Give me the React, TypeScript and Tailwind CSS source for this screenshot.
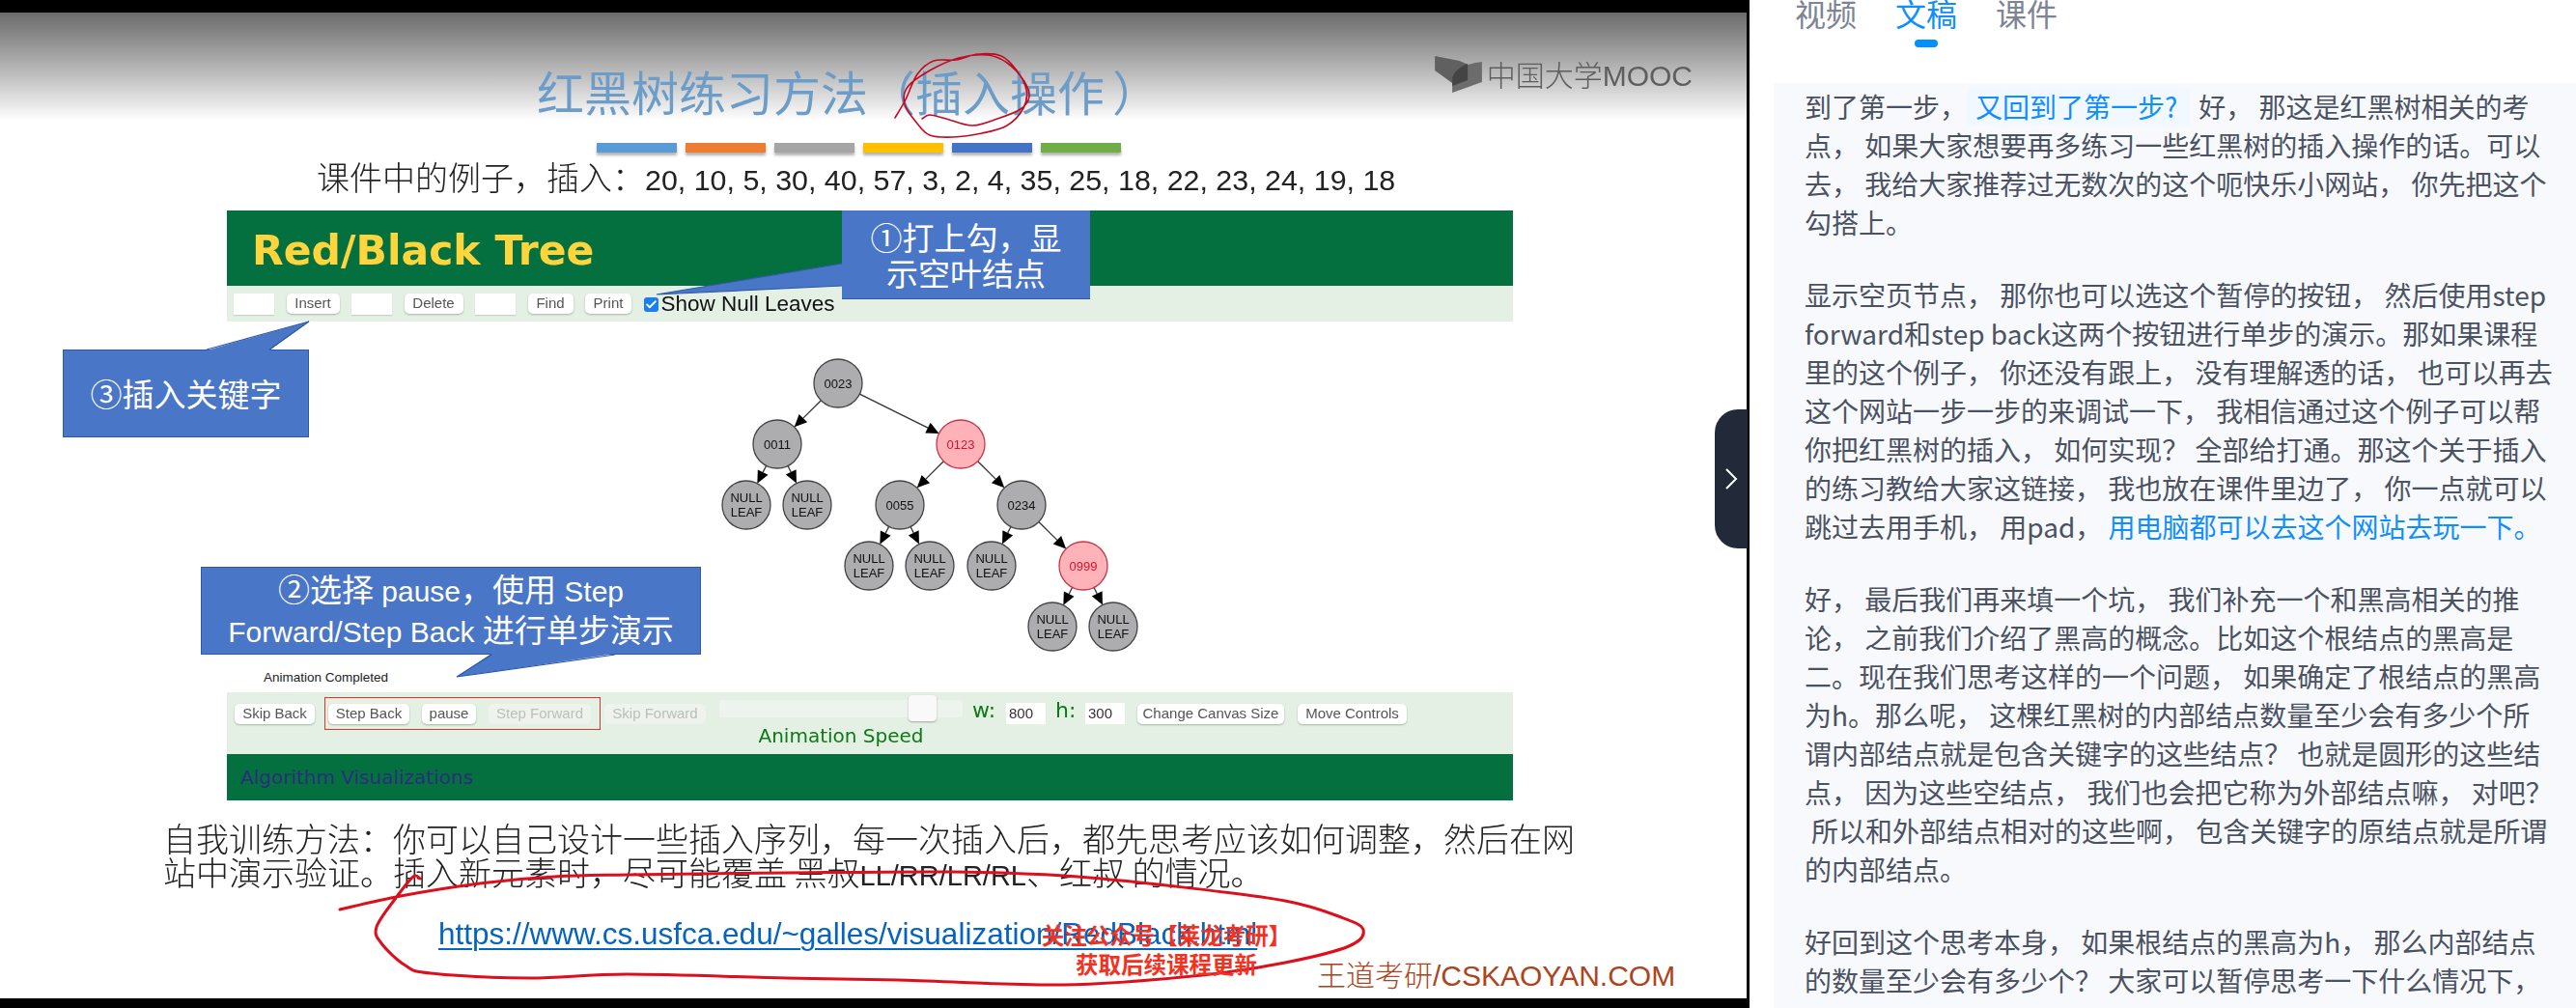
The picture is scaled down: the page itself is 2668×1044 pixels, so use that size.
import { Check } from "lucide-react";

type TreeNode = {
	x: number;
	y: number;
	label: string;
	red?: boolean;
	parent?: number;
};

const R = 25;

const nodes: TreeNode[] = [
	{ x: 868, y: 397, label: "0023" },
	{ x: 805, y: 460, label: "0011", parent: 0 },
	{ x: 995, y: 460, label: "0123", red: true, parent: 0 },
	{ x: 773, y: 523, label: "NULL", parent: 1 },
	{ x: 836, y: 523, label: "NULL", parent: 1 },
	{ x: 932, y: 523, label: "0055", parent: 2 },
	{ x: 1058, y: 523, label: "0234", parent: 2 },
	{ x: 900, y: 586, label: "NULL", parent: 5 },
	{ x: 963, y: 586, label: "NULL", parent: 5 },
	{ x: 1027, y: 586, label: "NULL", parent: 6 },
	{ x: 1122, y: 586, label: "0999", red: true, parent: 6 },
	{ x: 1090, y: 649, label: "NULL", parent: 10 },
	{ x: 1153, y: 649, label: "NULL", parent: 10 }
];

const circleScribble: [number, number][] = [
	[927, 122], [938, 103], [950, 77], [967, 63], [990, 62], [1013, 56], [1037, 58], [1053, 73], [1063, 93], [1060, 112],
	[1043, 130], [1017, 138], [987, 142], [963, 140], [950, 128], [937, 108], [940, 90], [963, 73], [993, 60], [1023, 57],
	[1043, 65], [1060, 83], [1066, 100], [1057, 113], [1033, 123], [1007, 130], [980, 123], [963, 119], [955, 123]
];

const linkScribble: [number, number][] = [
	[352, 942], [415, 928], [497, 915], [574, 908], [650, 906], [815, 904], [987, 903], [1102, 907], [1217, 918], [1331, 933],
	[1389, 950], [1412, 963], [1397, 980], [1331, 997], [1245, 1010], [1102, 1020], [930, 1015], [815, 1013], [650, 1009],
	[548, 1013], [446, 1008], [420, 1000], [395, 977], [390, 960], [410, 930], [428, 908], [435, 910]
];

// catmull-rom through the sampled pen points
function smooth(points: [number, number][]) {
	let d = `M${points[0][0]} ${points[0][1]}`;
	for (let i = 0; i < points.length - 1; i++) {
		const p0 = points[Math.max(i - 1, 0)];
		const p1 = points[i];
		const p2 = points[i + 1];
		const p3 = points[Math.min(i + 2, points.length - 1)];
		d += ` C${p1[0] + (p2[0] - p0[0]) / 6} ${p1[1] + (p2[1] - p0[1]) / 6} ${p2[0] - (p3[0] - p1[0]) / 6} ${p2[1] - (p3[1] - p1[1]) / 6} ${p2[0]} ${p2[1]}`;
	}
	return d;
}

function TreeEdge({ from, to }: { from: TreeNode; to: TreeNode }) {
	const dx = to.x - from.x;
	const dy = to.y - from.y;
	const len = Math.hypot(dx, dy);
	const ux = dx / len;
	const uy = dy / len;
	const tipX = to.x - ux * R;
	const tipY = to.y - uy * R;
	const baseX = tipX - ux * 13;
	const baseY = tipY - uy * 13;
	return (
		<g>
			<line x1={from.x + ux * R} y1={from.y + uy * R} x2={baseX} y2={baseY} stroke="#333" strokeWidth="1.3" />
			<polygon
				points={`${tipX},${tipY} ${baseX - uy * 6},${baseY + ux * 6} ${baseX + uy * 6},${baseY - ux * 6}`}
				fill="#000"
			/>
		</g>
	);
}

function TreeCanvas() {
	return (
		<svg viewBox="235 333 1332 384" className="h-full w-full">
			{nodes.map((node, i) =>
				node.parent === undefined ? null : <TreeEdge key={i} from={nodes[node.parent]} to={node} />
			)}
			{nodes.map((node, i) => (
				<g key={i} fontFamily="Liberation Sans, sans-serif" textAnchor="middle">
					<circle
						cx={node.x}
						cy={node.y}
						r={R}
						fill={node.red ? "#ffb3b8" : "#adadaf"}
						stroke={node.red ? "#c2394b" : "#444"}
						strokeWidth="1.3"
					/>
					{node.label === "NULL" ? (
						<text fontSize="13" fill="#111">
							<tspan x={node.x} y={node.y - 3}>
								NULL
							</tspan>
							<tspan x={node.x} y={node.y + 12}>
								LEAF
							</tspan>
						</text>
					) : (
						<text x={node.x} y={node.y + 4.5} fontSize="13" fill={node.red ? "#d4142e" : "#111"}>
							{node.label}
						</text>
					)}
				</g>
			))}
		</svg>
	);
}

function ToolButton({ className, disabled, children }: { className: string; disabled?: boolean; children: string }) {
	return (
		<div
			className={`flex h-[21px] shrink-0 items-center justify-center rounded-[5px] text-[15px] shadow-[0_1px_2px_rgba(0,0,0,0.25)] ${
				disabled ? "bg-[#eef3ee] text-[#b9c0b9] shadow-none" : "bg-white text-[#555]"
			} ${className}`}
		>
			{children}
		</div>
	);
}

function ToolInput() {
	return <div className="h-[22px] w-[42px] shrink-0 bg-white shadow-[0_1px_1px_rgba(0,0,0,0.12)]" />;
}

function MoocLogo() {
	return (
		<div className="mt-[43px] mr-[56px] flex items-start">
			<svg viewBox="0 0 50 40" preserveAspectRatio="none" className="h-[40px] w-[53px]">
				<path d="M2 2 L26 7 L41 14 L19 22 L19 30 L2 17 Z" fill="#606060" />
				<path d="M48 8 L48 29 L19 40 L19 23 Q27 10 48 8 Z" fill="#6c6c6c" />
				<path d="M19 23 Q24 14 34 10 L34 27 L19 33 Z" fill="#444" />
			</svg>
			<span className="mt-[-1px] ml-[3px] text-[30px] leading-[42px] font-light text-[#5e5e5e]">
				中国大学<span className="font-['Liberation_Sans',sans-serif]">MOOC</span>
			</span>
		</div>
	);
}

function Slide() {
	return (
		<div className="h-[1021px] w-[1809px] bg-white text-[#222] blur-[0.5px]">
			<div className="flex h-[112px] justify-between bg-gradient-to-b from-[#6c6c6c] to-white">
				<h1 className="mt-[53px] ml-[556px] text-[49px] leading-[56px] font-normal whitespace-nowrap text-[#6c9cc8]">
					红黑树练习方法（插入操作<span className="ml-[8px]">）</span>
				</h1>
				<MoocLogo />
			</div>

			<div className="mt-[23px] ml-[618px] flex gap-[9px]">
				<div className="h-[10px] w-[83px] bg-[#5b9bd5] shadow-[0_3px_3px_rgba(0,0,0,0.3)]" />
				<div className="h-[10px] w-[83px] bg-[#ed7d31] shadow-[0_3px_3px_rgba(0,0,0,0.3)]" />
				<div className="h-[10px] w-[83px] bg-[#a5a5a5] shadow-[0_3px_3px_rgba(0,0,0,0.3)]" />
				<div className="h-[10px] w-[83px] bg-[#ffc000] shadow-[0_3px_3px_rgba(0,0,0,0.3)]" />
				<div className="h-[10px] w-[83px] bg-[#4472c4] shadow-[0_3px_3px_rgba(0,0,0,0.3)]" />
				<div className="h-[10px] w-[83px] bg-[#70ad47] shadow-[0_3px_3px_rgba(0,0,0,0.3)]" />
			</div>

			<p className="mt-[7px] h-[36px] pl-[328px] text-[34px] leading-[36px] font-light whitespace-nowrap">
				课件中的例子，插入：
				<span className="font-['Liberation_Sans',sans-serif] text-[30.4px] font-normal">
					20, 10, 5, 30, 40, 57, 3, 2, 4, 35, 25, 18, 22, 23, 24, 19, 18
				</span>
			</p>

			<div className="mt-[17px] ml-[235px] w-[1332px] font-['Liberation_Sans',sans-serif]">
				<div className="flex h-[78px] items-center bg-[#04703f] pt-[6px] pl-[26px] font-['DejaVu_Sans',sans-serif] text-[42.5px] font-bold text-[#ffd53d]">
					Red/Black Tree
				</div>
				<div className="flex h-[37px] items-center gap-[12.5px] bg-[#e4f0e4] pl-[7px]">
					<ToolInput />
					<ToolButton className="w-[55px]">Insert</ToolButton>
					<ToolInput />
					<ToolButton className="w-[61px]">Delete</ToolButton>
					<ToolInput />
					<ToolButton className="w-[47px]">Find</ToolButton>
					<ToolButton className="w-[48px]">Print</ToolButton>
					<div className="flex items-center gap-[3px]">
						<div className="mt-[2px] flex h-[15px] w-[15px] items-center justify-center rounded-[3px] bg-[#1a7ff0]">
							<Check size={13} strokeWidth={3.5} color="#fff" />
						</div>
						<span className="text-[22.5px] leading-[26px] text-[#111]">Show Null Leaves</span>
					</div>
				</div>
				<div className="h-[384px]">
					<TreeCanvas />
				</div>
				<div className="flex h-[64px] items-start bg-[#e4f0e4] pt-[5px] pl-[8px]">
					<ToolButton className="mt-[7px] w-[83px]">Skip Back</ToolButton>
					<div className="ml-[10px] flex h-[34px] w-[286px] items-center gap-[13px] border border-[#e0352b] pl-[3px]">
						<ToolButton className="w-[84px]">Step Back</ToolButton>
						<ToolButton className="w-[56px]">pause</ToolButton>
						<ToolButton disabled className="w-[106px]">
							Step Forward
						</ToolButton>
					</div>
					<ToolButton disabled className="mt-[7px] ml-[4px] w-[105px]">
						Skip Forward
					</ToolButton>
					<div className="ml-[14px] w-[252px]">
						<div className="relative mt-[3px] h-[18px] rounded-[3px] bg-[#edf3ed]">
							<div className="absolute top-[-5px] left-[196px] h-[27px] w-[29px] rounded-[4px] bg-[#f8f9f8] shadow-[0_1px_2px_rgba(0,0,0,0.3)]" />
						</div>
						<div className="mt-[7px] text-center font-['DejaVu_Sans',sans-serif] text-[20px] leading-[24px] text-[#0b7a14]">
							Animation Speed
						</div>
					</div>
					<span className="mt-[1px] ml-[10px] w-[25px] font-['DejaVu_Sans',sans-serif] text-[22px] leading-[26px] text-[#0b7a14]">
						w:
					</span>
					<div className="mt-[6px] ml-[10px] flex h-[22px] w-[41px] items-center bg-white pl-[3px] text-[15px] text-[#333]">
						800
					</div>
					<span className="mt-[1px] ml-[10px] w-[21px] font-['DejaVu_Sans',sans-serif] text-[22px] leading-[26px] text-[#0b7a14]">
						h:
					</span>
					<div className="mt-[6px] ml-[10px] flex h-[22px] w-[41px] items-center bg-white pl-[3px] text-[15px] text-[#333]">
						300
					</div>
					<ToolButton className="mt-[7px] ml-[13px] w-[152px]">Change Canvas Size</ToolButton>
					<ToolButton className="mt-[7px] ml-[14px] w-[113px]">Move Controls</ToolButton>
				</div>
				<div className="flex h-[48px] items-center bg-[#04703f] pl-[14px] font-['DejaVu_Sans',sans-serif] text-[20px] text-[#2d2b7f]">
					Algorithm Visualizations
				</div>
			</div>

			<div className="mt-[21px] pl-[169px] text-[34px] leading-[35px] font-light whitespace-nowrap">
				<p className="h-[35px]">自我训练方法：你可以自己设计一些插入序列，每一次插入后，都先思考应该如何调整，然后在网</p>
				<p className="h-[35px]">
					站中演示验证。插入新元素时，尽可能覆盖 黑叔
					<span className="font-['Liberation_Sans',sans-serif] text-[29px] font-normal">LL/RR/LR/RL</span>、红叔
					的情况。
				</p>
			</div>

			<p className="mt-[27px] pl-[454px] font-['Liberation_Sans',sans-serif] text-[31.5px] leading-[40px] whitespace-nowrap text-[#0563c1] underline decoration-[2px] underline-offset-[4px]">
				https://www.cs.usfca.edu/~galles/visualization/RedBlack.html
			</p>
		</div>
	);
}

function Overlays() {
	return (
		<>
			{/* callout bodies */}
			<div className="absolute top-[218px] left-[872px] flex h-[92px] w-[257px] items-center justify-center border-b border-[#2f5ca8] bg-[#4a76c8] text-center text-[33px] leading-[37px] text-white">
				①打上勾，显
				<br />
				示空叶结点
			</div>
			<div className="absolute top-[362px] left-[65px] flex h-[91px] w-[255px] items-center justify-center border border-[#2b5aa8] bg-[#4a76c8] text-[33px] text-white">
				③插入关键字
			</div>
			<div className="absolute top-[587px] left-[208px] flex h-[91px] w-[518px] flex-col items-center justify-center border border-[#2b5aa8] bg-[#4a76c8] font-['Liberation_Sans','Noto_Sans_CJK_SC',sans-serif] text-[30px] leading-[41px] text-white">
				<span>
					<span className="text-[33px]">②选择</span> pause<span className="text-[33px]">，使用</span> Step
				</span>
				<span>
					Forward/Step Back <span className="text-[33px]">进行单步演示</span>
				</span>
			</div>
			<span className="absolute top-[693px] left-[273px] font-['Liberation_Sans',sans-serif] text-[13.5px] leading-[18px] text-[#222]">
				Animation Completed
			</span>

			<svg viewBox="0 0 1809 1044" className="pointer-events-none absolute top-0 left-0 h-[1044px] w-[1809px]">
				<polygon points="872,273 680,305 872,296" fill="#4a76c8" />
				<polyline points="872,296 680,305 872,273" fill="none" stroke="#2f5ca8" strokeWidth="1.2" />
				<polygon points="214,363 320,333 279,363" fill="#4a76c8" />
				<polyline points="214,362 320,333 279,362" fill="none" stroke="#2b5aa8" strokeWidth="1.2" />
				<polygon points="509,677 473,701 637,677" fill="#4a76c8" />
				<polyline points="509,678 473,701 637,678" fill="none" stroke="#2b5aa8" strokeWidth="1.2" />
				<path d={smooth(circleScribble)} fill="none" stroke="#c20a24" strokeWidth="1.6" strokeLinecap="round" />
				<path d={smooth(linkScribble)} fill="none" stroke="#dc0f1c" strokeWidth="3" strokeLinecap="round" />
			</svg>

			{/* course watermarks burnt into the video */}
			<div className="absolute top-[953px] left-[1078px] w-[260px] text-center text-[23.5px] leading-[30px] font-bold whitespace-nowrap text-[#f2311f]">
				关注公众号【莱龙考研】
				<br />
				获取后续课程更新
			</div>
			<span className="absolute top-[986px] left-[1364px] font-['Liberation_Sans','Noto_Sans_CJK_SC',sans-serif] text-[30px] leading-[44px] whitespace-nowrap text-[#ac4420]">
				<span className="font-['Noto_Sans_CJK_SC',sans-serif] font-light">王道考研</span>/CSKAOYAN.COM
			</span>
		</>
	);
}

const paragraphClass = "mt-[35px]";

function TranscriptPanel() {
	return (
		<div className="min-w-0 flex-1 overflow-hidden">
			<div className="flex h-[86px] items-start gap-[40px] pl-[47px]">
				<span className="text-[32px] leading-[26px] text-[#7d8494]">视频</span>
				<div className="flex flex-col items-center">
					<span className="text-[32px] leading-[26px] text-[#0f8fff]">文稿</span>
					<div className="mt-[15px] h-[8px] w-[24px] rounded-full bg-[#0090ff]" />
				</div>
				<span className="text-[32px] leading-[26px] text-[#7d8494]">课件</span>
			</div>
			<div className="ml-[25px] h-[958px] bg-[#f7f9fd] pt-[4px] pl-[32px] text-[28px] leading-[40px] whitespace-nowrap text-[#4b5262]">
				<div>
					<p>
						到了第一步，
						<span className="inline-block bg-[#f1f8ff] pr-[13px] pl-[9px] text-[#0f8fff]">又回到了第一步?</span>
						<span className="ml-[9px]">好， 那这是红黑树相关的考</span>
					</p>
					<p>点， 如果大家想要再多练习一些红黑树的插入操作的话。可以</p>
					<p>去， 我给大家推荐过无数次的这个呃快乐小网站， 你先把这个</p>
					<p>勾搭上。</p>
				</div>
				<div className={paragraphClass}>
					<p>显示空页节点， 那你也可以选这个暂停的按钮， 然后使用step</p>
					<p>forward和step back这两个按钮进行单步的演示。那如果课程</p>
					<p>里的这个例子， 你还没有跟上， 没有理解透的话， 也可以再去</p>
					<p>这个网站一步一步的来调试一下， 我相信通过这个例子可以帮</p>
					<p>你把红黑树的插入， 如何实现？ 全部给打通。那这个关于插入</p>
					<p>的练习教给大家这链接， 我也放在课件里边了， 你一点就可以</p>
					<p>
						跳过去用手机， 用pad， <span className="text-[#0f8fff]">用电脑都可以去这个网站去玩一下。</span>
					</p>
				</div>
				<div className={paragraphClass}>
					<p>好， 最后我们再来填一个坑， 我们补充一个和黑高相关的推</p>
					<p>论， 之前我们介绍了黑高的概念。比如这个根结点的黑高是</p>
					<p>二。现在我们思考这样的一个问题， 如果确定了根结点的黑高</p>
					<p>为h。那么呢， 这棵红黑树的内部结点数量至少会有多少个所</p>
					<p>谓内部结点就是包含关键字的这些结点？ 也就是圆形的这些结</p>
					<p>点， 因为这些空结点， 我们也会把它称为外部结点嘛， 对吧？</p>
					<p className="pl-[7px]">所以和外部结点相对的这些啊， 包含关键字的原结点就是所谓</p>
					<p>的内部结点。</p>
				</div>
				<div className={paragraphClass}>
					<p>好回到这个思考本身， 如果根结点的黑高为h， 那么内部结点</p>
					<p>的数量至少会有多少个？ 大家可以暂停思考一下什么情况下，</p>
				</div>
			</div>
		</div>
	);
}

export default function App() {
	return (
		<div className="flex h-[1044px] w-[2668px] overflow-hidden bg-white font-['Noto_Sans_CJK_SC',sans-serif]">
			<div className="relative h-[1044px] w-[1812px] shrink-0 bg-black pt-[13px]">
				<Slide />
				<Overlays />
				<div className="absolute top-[424px] left-[1776px] flex h-[144px] w-[34px] items-center justify-center rounded-l-[24px] bg-[#222a3a]">
					<svg viewBox="0 0 14 22" className="mt-[-1px] h-[22px] w-[14px]">
						<path d="M2 1 L12 11 L2 21" fill="none" stroke="#fff" strokeWidth="2" />
					</svg>
				</div>
			</div>
			<TranscriptPanel />
		</div>
	);
}
